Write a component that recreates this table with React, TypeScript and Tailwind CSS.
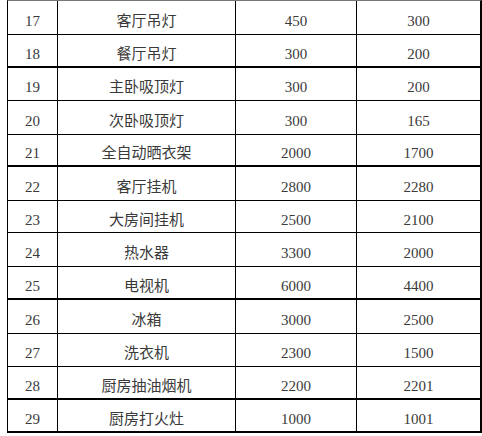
const rows = [
  { no: 17, name: '客厅吊灯', a: 450, b: 300, h: 34, thick: false },
  { no: 18, name: '餐厅吊灯', a: 300, b: 200, h: 33, thick: true },
  { no: 19, name: '主卧吸顶灯', a: 300, b: 200, h: 33, thick: false },
  { no: 20, name: '次卧吸顶灯', a: 300, b: 165, h: 34, thick: false },
  { no: 21, name: '全自动晒衣架', a: 2000, b: 1700, h: 32, thick: true },
  { no: 22, name: '客厅挂机', a: 2800, b: 2280, h: 34, thick: false },
  { no: 23, name: '大房间挂机', a: 2500, b: 2100, h: 32, thick: false },
  { no: 24, name: '热水器', a: 3300, b: 2000, h: 34, thick: false },
  { no: 25, name: '电视机', a: 6000, b: 4400, h: 33, thick: true },
  { no: 26, name: '冰箱', a: 3000, b: 2500, h: 34, thick: false },
  { no: 27, name: '洗衣机', a: 2300, b: 1500, h: 33, thick: false },
  { no: 28, name: '厨房抽油烟机', a: 2200, b: 2201, h: 33, thick: true },
  { no: 29, name: '厨房打火灶', a: 1000, b: 1001, h: 33, thick: true },
];

// text sits a little below the middle of each row
const cell = 'flex items-center justify-center pt-[7px]';

export default function App() {
  return (
    <div className="w-[482px] h-[436px] bg-white overflow-hidden text-[15px] text-[#3a3a3a] font-['Liberation_Serif','Noto_Sans_CJK_SC',serif]">
      <div className="ml-[7px] w-[475px] border-t border-t-[#777] border-l border-l-black border-r-2 border-r-black">
        {rows.map((r) => (
          <div
            key={r.no}
            className={`grid grid-cols-[50px_178px_121px_123px] border-black ${r.thick ? 'border-b-2' : 'border-b'}`}
            style={{ height: r.h }}
          >
            <div className={`${cell} border-r border-black`}>{r.no}</div>
            <div className={`${cell} border-r border-black`}>{r.name}</div>
            <div className={`${cell} border-r border-black`}>{r.a}</div>
            <div className={cell}>{r.b}</div>
          </div>
        ))}
      </div>
    </div>
  );
}
